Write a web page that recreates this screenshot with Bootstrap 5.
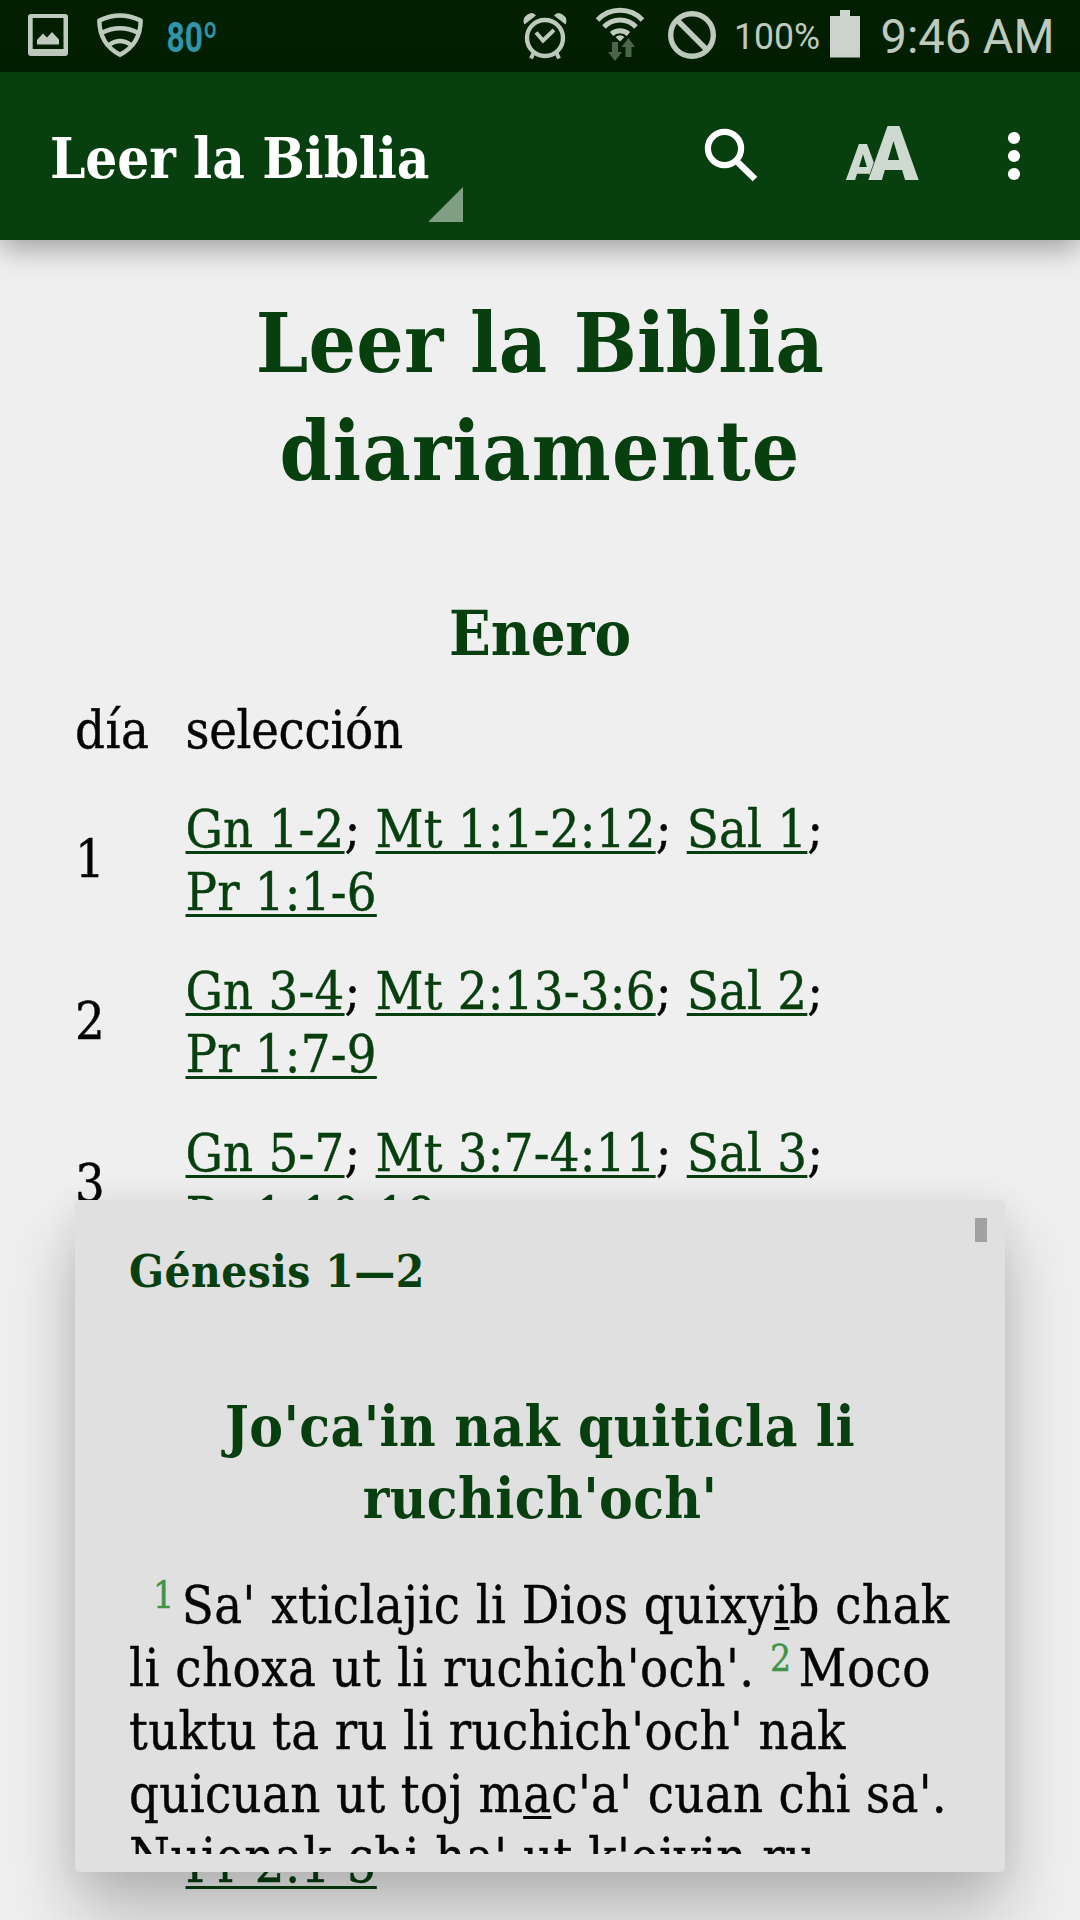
<!DOCTYPE html>
<html lang="es">
<head>
<meta charset="utf-8">
<meta name="viewport" content="width=device-width, initial-scale=1">
<title>Leer la Biblia</title>
<link href="https://cdn.jsdelivr.net/npm/bootstrap@5.3.0/dist/css/bootstrap.min.css" rel="stylesheet">
<style>
  :root { --green: #073f0f; --ink: #050505; }
  body { background: #efefef; color: var(--ink); font-family: "DejaVu Serif Condensed", "DejaVu Serif", serif; font-size: 52px; line-height: 63.2px; }
  .screen { width: 1080px; height: 1920px; }
  .status-bar { height: 72px; background: #021f02; padding: 0 20px; color: #bdcabd; }
  .status-bar svg { height: 72px; display: block; }
  .status-bar text { font-family: Roboto, sans-serif; fill: currentColor; }
  .app-bar { height: 168px; background: var(--green); padding: 0 0 0 50px; box-shadow: 0 8px 28px rgba(0,0,0,.35); z-index: 2; }
  .app-title { font-size: 56px; line-height: 166px; letter-spacing: -.1px; padding-top: 3px; color: #fff; }
  .app-bar svg { height: 168px; display: block; flex: none; }
  .page-title { font-size: 83px; line-height: 108px; color: var(--green); margin: 49px 0 88.5px; letter-spacing: .3px; }
  .page-title span { letter-spacing: 1.2px; }
  .month { font-size: 61px; line-height: 80px; color: var(--green); margin: 0 0 7.5px; }
  .plan { padding-left: 75px; }
  .plan-row { padding: 17.8px 0; }
  .day { width: 110.5px; padding-bottom: 3px; flex: none; }
  .plan-head .day { padding-bottom: 0; letter-spacing: .5px; }
  .plan-head .picks { letter-spacing: -.3px; }
  .picks { white-space: nowrap; letter-spacing: .22px; }
  .plan, .verse-text { -webkit-text-stroke: .4px; }
  .picks a, u { text-decoration: underline; text-decoration-thickness: 3px; text-underline-offset: 4px; text-decoration-skip-ink: none; }
  .picks a { color: var(--green); }
  .verse-pop { left: 75px; top: 1200px; width: 930px; height: 672px; background: #e0e0e0; border-radius: 5px; padding: 18px 54px; z-index: 3;
    box-shadow: 0 40px 70px rgba(0,0,0,.24), 0 4px 36px rgba(0,0,0,.06); }
  .verse-clip { height: 636px; padding-top: 25px; }
  .pop-ref { font-size: 45.6px; line-height: 56px; color: var(--green); letter-spacing: .4px; margin: 0 0 90.5px; }
  .pop-head { font-size: 56.2px; line-height: 72px; color: var(--green); letter-spacing: .4px; margin: 0 0 40px; }
  .verse-text { white-space: nowrap; letter-spacing: .34px; text-indent: 24px; margin: 0; }
  .wide-line { letter-spacing: .48px; }
  .verse-num { font-size: 37px; line-height: 0; vertical-align: 15px; color: #3f9448; margin-right: 7px; top: 0; }
  .thumb { right: 18px; top: 18px; width: 12px; height: 24px; background: #a1a1a1; }
</style>
<script src="https://cdn.jsdelivr.net/npm/bootstrap@5.3.0/dist/js/bootstrap.bundle.min.js"></script>
</head>
<body>
<div class="screen position-relative overflow-hidden">

  <header class="status-bar d-flex justify-content-between">
    <div class="d-flex">
      <svg width="60" viewBox="20 0 60 72"><path fill="currentColor" fill-rule="evenodd" d="M31 14H65a3 3 0 0 1 3 3V53a3 3 0 0 1-3 3H31a3 3 0 0 1-3-3V17a3 3 0 0 1 3-3ZM32.7 18V49H63.5V18Z"/><path fill="currentColor" d="M37 44.6V40L43 33.5 47 37.5 52 32 59 39.5V44.6Z"/></svg>
      <svg width="75" viewBox="80 0 75 72" fill="none" stroke="currentColor" stroke-width="4.4"><path stroke-linejoin="round" d="M99.3 20.5Q120 10.5 140.7 20.5Q140.5 44 120 54.8Q99.5 44 99.3 20.5Z"/><path d="M102.5 32.5Q120 24 137.5 32.5M109.5 44.5Q120 37.5 130.5 44.5"/></svg>
      <svg width="75" viewBox="155 0 75 72"><text x="166.5" y="51.5" font-size="42" style="font-weight:700;fill:#3094ab" textLength="51" lengthAdjust="spacingAndGlyphs">80º</text></svg>
    </div>
    <div class="d-flex">
      <svg width="70" viewBox="510 0 70 72" fill="none" stroke="currentColor"><circle cx="545" cy="38" r="18" stroke-width="4.4"/><path stroke-width="4" d="M536 32.5 543 40.5 554 30M533.5 53 531 58.5M556.5 53 559 58.5"/><path fill="currentColor" stroke="none" d="M524.5 24.5 536 15.5Q532.5 11 527.5 14.5Q521.5 18.5 524.5 24.5ZM565.5 24.5 554 15.5Q557.5 11 562.5 14.5Q568.5 18.5 565.5 24.5Z"/></svg>
      <svg width="76" viewBox="580 0 76 72" fill="none" stroke="currentColor" stroke-width="5"><path d="M597.5 20A31 31 0 0 1 642.5 20M604 27A22 22 0 0 1 636 27M611.5 34A13 13 0 0 1 628.5 34"/><path fill="currentColor" stroke="none" d="M620 41.5 615.5 37Q620 33.5 624.5 37Z"/><path stroke="none" fill="#4a684b" d="M612 42H618V52H622L615 61 608 52H612ZM625.5 57V47H621.5L628.5 38 635 47H631.5V57Z"/></svg>
      <svg width="74" viewBox="656 0 74 72" fill="none" stroke="currentColor" stroke-width="5.4"><circle cx="692" cy="35" r="21.3"/><path d="M677 20 707 50"/></svg>
      <svg width="95" viewBox="730 0 95 72"><text x="734" y="49" font-size="36.5" font-weight="400" textLength="86" lengthAdjust="spacingAndGlyphs">100%</text></svg>
      <svg width="47" viewBox="825 0 47 72"><path fill="#ccd4cd" d="M840 10H850V16H860V57.5H830V16H840Z"/></svg>
      <svg width="188" viewBox="872 0 188 72"><text x="880.5" y="53" font-size="47.5" font-weight="400" textLength="174" lengthAdjust="spacingAndGlyphs">9:46 AM</text></svg>
    </div>
  </header>

  <nav class="app-bar position-relative d-flex">
    <div class="app-title fw-bold">Leer la Biblia</div>
    <svg class="me-auto" width="40" viewBox="428 72 40 168"><path fill="#809e84" d="M462 187V222H427Z"/></svg>
    <svg width="130" viewBox="670 72 130 168" fill="none" stroke="#fff"><circle cx="724.5" cy="148.5" r="16.6" stroke-width="6.2"/><path stroke-width="6.6" d="M738 162.5 755 179"/></svg>
    <svg width="160" viewBox="800 72 160 168" fill="#ced9cf" font-family="Roboto, sans-serif" font-weight="900"><text x="846" y="180" font-size="50.5" textLength="34" lengthAdjust="spacingAndGlyphs">A</text><text x="868.500" y="180" font-size="76" textLength="50" lengthAdjust="spacingAndGlyphs" stroke="#073f0f" stroke-width="1.500" paint-order="stroke">A</text></svg>
    <svg width="120" viewBox="960 72 120 168" fill="#fff"><circle cx="1014" cy="138" r="6.1"/><circle cx="1014" cy="156" r="6.1"/><circle cx="1014" cy="174" r="6.1"/></svg>
  </nav>

  <main>
    <h1 class="page-title text-center fw-bold">Leer la Biblia<br><span>diariamente</span></h1>
    <h2 class="month text-center fw-bold">Enero</h2>
    <div class="plan">
      <div class="plan-row plan-head d-flex align-items-center"><div class="day">día</div><div class="picks">selección</div></div>
      <div class="plan-row d-flex align-items-center"><div class="day">1</div><div class="picks"><a href="#">Gn 1-2</a>; <a href="#">Mt 1:1-2:12</a>; <a href="#">Sal 1</a>;<br><a href="#">Pr 1:1-6</a></div></div>
      <div class="plan-row d-flex align-items-center"><div class="day">2</div><div class="picks"><a href="#">Gn 3-4</a>; <a href="#">Mt 2:13-3:6</a>; <a href="#">Sal 2</a>;<br><a href="#">Pr 1:7-9</a></div></div>
      <div class="plan-row d-flex align-items-center"><div class="day">3</div><div class="picks"><a href="#">Gn 5-7</a>; <a href="#">Mt 3:7-4:11</a>; <a href="#">Sal 3</a>;<br><a href="#">Pr 1:10-19</a></div></div>
      <div class="plan-row"><br><br></div>
      <div class="plan-row"><br><br></div>
      <div class="plan-row"><br><br></div>
      <div class="plan-row d-flex align-items-center"><div class="day"></div><div class="picks"><br><a href="#">Pr 2:1-5</a></div></div>
    </div>
  </main>

  <section class="verse-pop position-absolute">
    <div class="verse-clip overflow-hidden">
      <h3 class="pop-ref fw-bold">Génesis 1—2</h3>
      <h4 class="pop-head text-center fw-bold">Jo'ca'in nak quiticla li<br>ruchich'och'</h4>
      <p class="verse-text"><span class="wide-line"><sup class="verse-num">1</sup>Sa' xticlajic li Dios quixy<u>i</u>b chak<br>li choxa ut li ruchich'och'. <sup class="verse-num">2</sup>Moco</span><br>tuktu ta ru li ruchich'och' nak<br>quicuan ut toj m<u>a</u>c'a' cuan chi sa'.<br><span class="wide-line">Nujenak chi ha' ut k'ojyin ru</span></p>
    </div>
    <div class="thumb position-absolute"></div>
  </section>
</div>
</body>
</html>
